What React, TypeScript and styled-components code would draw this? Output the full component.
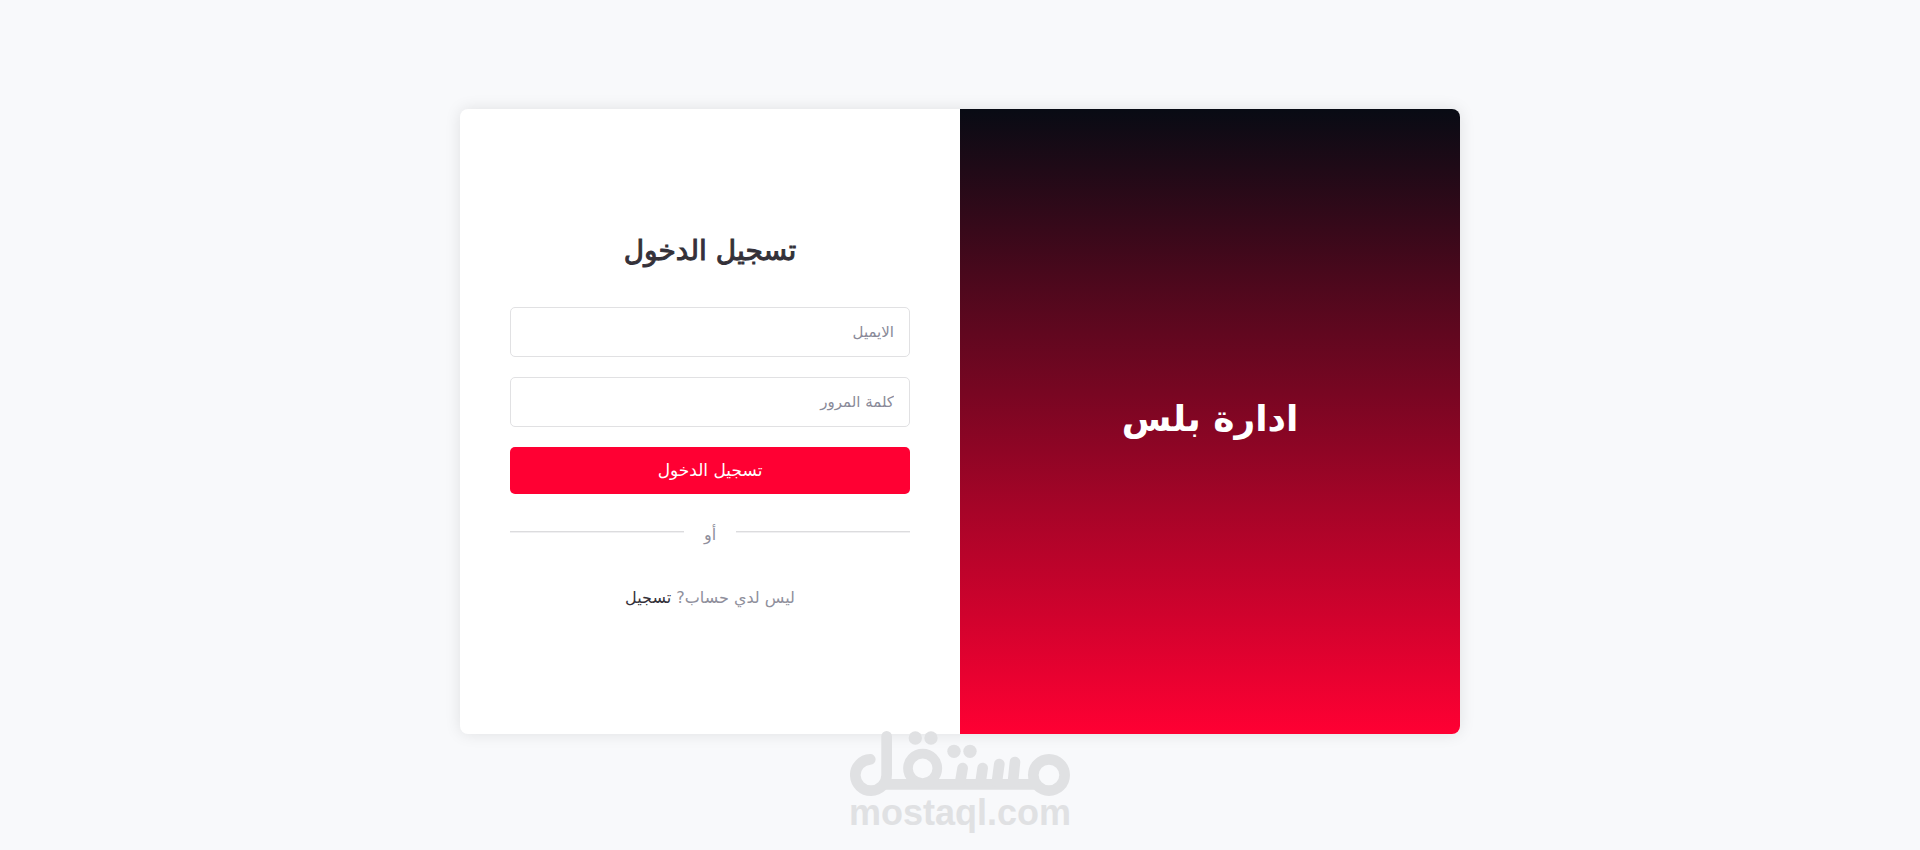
import React from "react";
import styled, { createGlobalStyle } from "styled-components";

const GlobalStyle = createGlobalStyle`
  *, *::before, *::after { box-sizing: border-box; }
  body {
    margin: 0;
    background: #f8f9fb;
    color: #343139;
    font-family: "DejaVu Sans", sans-serif;
    font-size: 16px;
    line-height: 24px;
  }
`;

const Page = styled.div`
  position: relative;
  display: flex;
  align-items: center;
  justify-content: center;
  min-height: 100vh;
  padding: 24px 24px 32px;
`;

const Card = styled.main`
  display: grid;
  grid-template-columns: 1fr 1fr;
  width: 100%;
  max-width: 1000px;
  min-height: 625px;
  border-radius: 8px;
  overflow: hidden;
  background: #fff;
  box-shadow: 0 0 16px rgba(0, 0, 0, 0.1);
`;

const BrandPanel = styled.section`
  display: flex;
  align-items: center;
  justify-content: center;
  padding-bottom: 4px;
  background: linear-gradient(180deg, #080b14, #ff0033);
`;

const BrandName = styled.h1`
  margin: 0;
  color: #fff;
  font-size: 36px;
  line-height: 48px;
  font-weight: 700;
`;

const FormPanel = styled.section`
  display: flex;
  flex-direction: column;
  justify-content: center;
  padding: 0 50px 6px;
`;

const Title = styled.h2`
  margin: 0 0 32px;
  text-align: center;
  font-size: 28px;
  line-height: 48px;
  font-weight: 400;
  -webkit-text-stroke: 1px currentColor;
`;

const Form = styled.form`
  display: flex;
  flex-direction: column;
  gap: 20px;
`;

const Field = styled.input`
  width: 100%;
  height: 50px;
  padding: 0 15px;
  border: 1px solid #e1e1e3;
  border-radius: 5px;
  background: #fff;
  color: #343139;
  font: inherit;
  font-size: 15px;

  &::placeholder {
    color: #8a8a99;
    opacity: 1;
  }
`;

const SubmitButton = styled.button`
  height: 47px;
  padding: 0;
  border: 0;
  border-radius: 5px;
  background: #ff0033;
  color: #fff;
  font: inherit;
  font-size: 17px;
  cursor: pointer;
`;

const Divider = styled.div`
  display: flex;
  align-items: center;
  gap: 20px;
  margin: 23px 0 39px;
  color: #8f8f9c;

  &::before,
  &::after {
    content: "";
    flex: 1;
    border-top: 1px solid #dcdcde;
    border-bottom: 1px solid #f0f0f2;
  }
`;

const DividerText = styled.span`
  padding-top: 6px;
`;

const SignupLine = styled.p`
  margin: 0;
  text-align: center;
  color: #8f8f9c;
`;

const SignupLink = styled.a`
  color: #343139;
  text-decoration: none;
`;

const Watermark = styled.div`
  position: absolute;
  bottom: 20px;
  left: 50%;
  display: flex;
  flex-direction: column;
  align-items: center;
  transform: translateX(-50%);
  color: #e0e1e3;
  pointer-events: none;
`;

const WatermarkLogo = styled.svg`
  display: block;
  width: 221px;
  height: 65px;
`;

const WatermarkName = styled.span`
  font-family: "Liberation Sans", sans-serif;
  font-size: 36px;
  line-height: 34px;
  font-weight: 700;
`;

export default function App() {
  return (
    <>
      <GlobalStyle />
      <Page lang="ar" dir="rtl">
        <Card>
          <BrandPanel>
            <BrandName>ادارة بلس</BrandName>
          </BrandPanel>
          <FormPanel>
            <Title>تسجيل الدخول</Title>
            <Form onSubmit={(event) => event.preventDefault()}>
              <Field type="email" name="email" dir="rtl" placeholder="الايميل" aria-label="الايميل" />
              <Field type="password" name="password" dir="rtl" placeholder="كلمة المرور" aria-label="كلمة المرور" />
              <SubmitButton type="submit">تسجيل الدخول</SubmitButton>
            </Form>
            <Divider>
              <DividerText>أو</DividerText>
            </Divider>
            <SignupLine>
              ليس لدي حساب<bdi dir="rtl">?</bdi> <SignupLink href="#signup">تسجيل</SignupLink>
            </SignupLine>
          </FormPanel>
        </Card>
        <Watermark dir="ltr">
          <WatermarkLogo viewBox="59 63 663 195" aria-hidden="true">
            <g fill="none" stroke="currentColor" strokeWidth="32" strokeLinecap="round">
              <path d="M120 148A47 47 0 1 0 169 195V79" />
              <path d="M160 223H618" strokeLinecap="butt" />
              <circle cx="277" cy="175" r="44" strokeWidth="29" />
              <circle cx="656" cy="195" r="47" />
              <path d="M554 156L548 215M507 162L500 215M457 174L451 215M397 174L390 215" />
            </g>
            <g fill="currentColor">
              <circle cx="255" cy="84" r="20" />
              <circle cx="302" cy="84" r="20" />
              <circle cx="371" cy="124" r="20" />
              <circle cx="419" cy="124" r="20" />
            </g>
          </WatermarkLogo>
          <WatermarkName>mostaql.com</WatermarkName>
        </Watermark>
      </Page>
    </>
  );
}
